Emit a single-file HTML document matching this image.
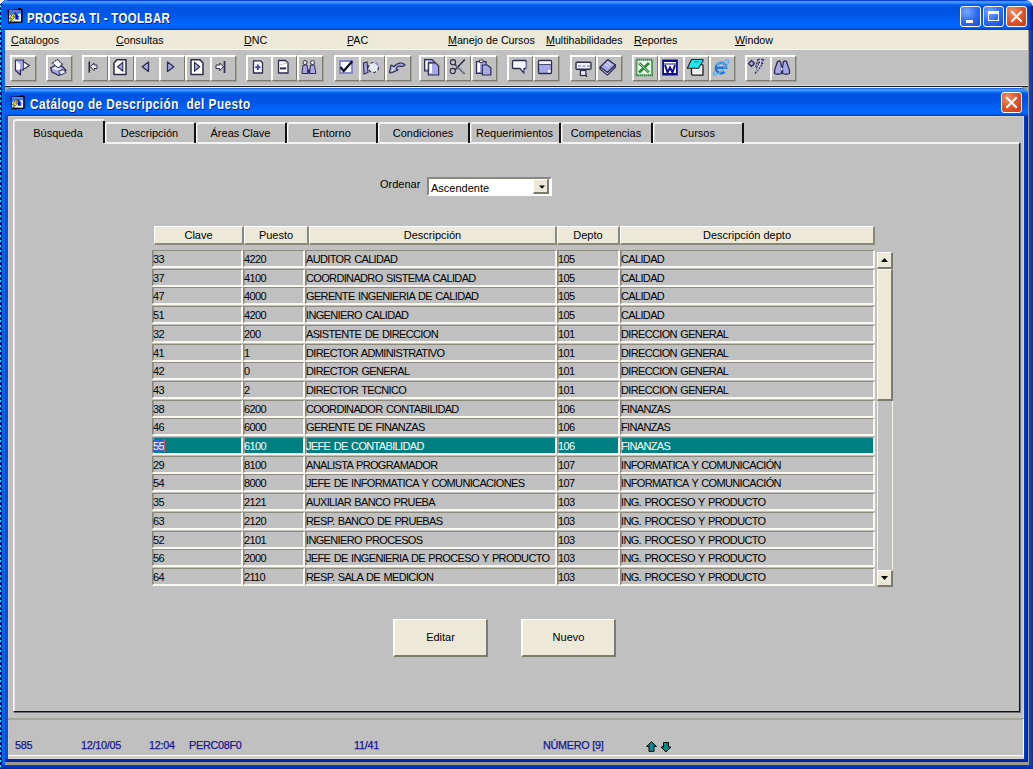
<!DOCTYPE html><html><head><meta charset="utf-8"><style>
*{margin:0;padding:0;box-sizing:border-box}
html,body{width:1033px;height:769px;overflow:hidden;background:#F6F2EA;font-family:"Liberation Sans",sans-serif;}
.ab{position:absolute}
.title{background:linear-gradient(#0842D8 0px,#0842D8 1px,#3D95FF 1px,#3D95FF 3px,#0A6EF8 4px,#0054E3 6px,#0054E3 13px,#005CEE 18px,#0066FF 24px,#0064FA 28px,#0047D0 29px,#0040C8 30px)}
.ctitle{background:linear-gradient(#0842D8 0px,#3D95FF 1px,#3D95FF 3px,#0A6EF8 4px,#0054E3 6px,#0054E3 12px,#005CEE 17px,#0066FF 22px,#0064FA 26px,#0047D0 27px,#0040C8 28px)}
.tt{color:#fff;font-weight:bold;white-space:nowrap;text-shadow:1px 1px 0 #0a1e80}
.menu{font-size:10.7px;color:#000;white-space:nowrap;top:33.5px}
.tb{position:absolute;top:55px;width:26px;height:26px;background:#C0C0C0;border-top:2px solid #FCFCF8;border-left:2px solid #FCFCF8;border-right:1px solid #7C7A6C;border-bottom:1px solid #7C7A6C;box-shadow:1px 1px 0 #A8A698}
.tb svg{position:absolute;left:1px;top:1px}
.tab{position:absolute;top:122px;height:22px;font-size:11px;color:#000;text-align:center;line-height:18px;white-space:nowrap}
.hd{position:absolute;top:226px;height:19px;background:#ECE9D8;border-top:1px solid #FFFFFF;border-left:1px solid #FFFFFF;border-right:2px solid #8A887A;border-bottom:2px solid #8A887A;font-size:11px;text-align:center;line-height:16px;color:#000}
.c{position:absolute;height:18px;background:#C0C0C0;border-top:1px solid #8C8A7C;border-left:1px solid #8C8A7C;box-shadow:inset 1px 0 0 #9C9A8C;border-right:2px solid #FAF8F0;border-bottom:2px solid #FAF8F0;font-size:11px;line-height:16px;letter-spacing:-0.65px;word-spacing:1px;text-indent:0px;color:#000;white-space:nowrap;overflow:hidden}
.c.sel{background:#008080;color:#fff}
.st{position:absolute;top:739px;font-size:10.8px;letter-spacing:-0.25px;color:#161690;-webkit-text-stroke:0.25px #161690;white-space:nowrap}
</style></head><body><div class="ab" style="left:0;top:0;width:1px;height:769px;background:repeating-linear-gradient(#00F0F0 0px,#00F0F0 2px,#000880 2px,#000880 5px)"></div><div class="ab" style="left:1px;top:0;width:1px;height:769px;background:#0010C8"></div><div class="ab" style="left:2px;top:0;width:3px;height:769px;background:#1060E8"></div><div class="ab title" style="left:1px;top:0;width:1032px;height:30px;border-radius:7px 8px 0 0"></div><div class="ab" style="left:1026px;top:6px;width:7px;height:24px;background:linear-gradient(90deg,rgba(0,40,180,0),#0018A0)"></div><div class="ab" style="left:0;top:0;width:5px;height:5px;background:linear-gradient(135deg,#F8F0D8 50%,transparent 50%)"></div><div class="ab" style="left:1028px;top:30px;width:1px;height:735px;background:#9C9A8C"></div><div class="ab" style="left:1029px;top:30px;width:4px;height:739px;background:linear-gradient(90deg,#0050E8,#0030B0)"></div><div class="ab" style="left:1px;top:765px;width:1032px;height:4px;background:linear-gradient(#0040D8,#0028A0)"></div><div class="ab" style="left:5px;top:762px;width:1023px;height:3px;background:#9C9A8C"></div><svg class="ab" style="left:7px;top:7px" width="17" height="17" viewBox="0 0 17 17"><path d="M0.5 3 L11 2.2 L11 1 L14.2 1 L14.2 2 L15.6 2 L15.6 15.6 L1.5 16.5 Z" fill="#00001A"/>
<rect x="2" y="3.5" width="12" height="11" fill="#D8F4F0"/>
<path d="M2 3.5 H14 V6.5 Q8 7.5 2 8.5 Z" fill="#4878F0"/>
<rect x="4.5" y="7.5" width="2.5" height="2.5" fill="#F08888"/>
<path d="M8 5 L12.5 10 L10.8 10 L12.5 13 L8.5 13 Z" fill="#0010F0"/>
<path d="M8.5 12.5 H13.5 V14 H8.5Z" fill="#fff"/>
<path d="M5.8 6.5 L2.5 11.5 L4.8 11.5 L1.2 17 L8.2 9.8 L5.9 9.8 L8 6.5 Z" fill="#F8F000" stroke="#202000" stroke-width="0.6"/></svg><div class="ab tt" style="left:27px;top:10px;font-size:14.5px;line-height:16px;letter-spacing:0.5px;transform:scaleX(0.785);transform-origin:0 0">PROCESA TI - TOOLBAR</div><div class="ab" style="left:960px;top:6px;width:21px;height:21px;border:1px solid #fff;border-radius:3px;background:radial-gradient(circle at 30% 25%,#7AA8FF 0%,#2F6EF0 50%,#1648D8 100%)"><div class="ab" style="left:5px;top:13px;width:7px;height:3px;background:#fff"></div></div><div class="ab" style="left:983px;top:6px;width:21px;height:21px;border:1px solid #fff;border-radius:3px;background:radial-gradient(circle at 30% 25%,#7AA8FF 0%,#2F6EF0 50%,#1648D8 100%)"><div class="ab" style="left:4px;top:4px;width:11px;height:10px;border:1px solid #fff;border-top:3px solid #fff"></div></div><div class="ab" style="left:1006px;top:6px;width:21px;height:21px;border:1px solid #fff;border-radius:3px;background:radial-gradient(circle at 30% 25%,#F09070 0%,#E05A30 45%,#C83810 100%)"><svg class="ab" style="left:0;top:0" width="19" height="19" viewBox="0 0 19 19"><path d="M5 5 L14 14 M14 5 L5 14" stroke="#fff" stroke-width="2" stroke-linecap="square"/></svg></div><div class="ab" style="left:5px;top:30px;width:1023px;height:20px;background:#ECE9D8;border-bottom:1px solid #F8F6EC"></div><div class="ab menu" style="left:11px"><u>C</u>atalogos</div><div class="ab menu" style="left:116px"><u>C</u>onsultas</div><div class="ab menu" style="left:244px"><u>D</u>NC</div><div class="ab menu" style="left:347px"><u>P</u>AC</div><div class="ab menu" style="left:448px"><u>M</u>anejo de Cursos</div><div class="ab menu" style="left:546px"><u>M</u>ultihabilidades</div><div class="ab menu" style="left:634px"><u>R</u>eportes</div><div class="ab menu" style="left:735px"><u>W</u>indow</div><div class="ab" style="left:5px;top:50px;width:1023px;height:36px;background:#C0C0C0;border-bottom:1px solid #E0DED8"></div><div class="ab" style="left:5px;top:86px;width:1023px;height:1px;background:#1c1c1c"></div><div class="tb" style="left:10px"><svg width="19" height="19" viewBox="0 0 19 19"><path d="M2.5 2 L10.5 2 L10.5 12 L7.5 12 L7.5 17 L2.5 12.5 Z" fill="#A8A8E8" stroke="#2C2C4C" stroke-width="1.2" stroke-linejoin="round"/><path d="M3.2 3 L7 6.5 L7 11.5 L3.2 11.5 Z" fill="#fff"/><path d="M10.8 4.5 L12 4.5 L16.2 7.5 L12 10.5 L10.8 10.5" fill="#F0F0F4" stroke="#303040" stroke-width="1.2"/></svg></div><div class="tb" style="left:46px"><svg width="19" height="19" viewBox="0 0 19 19"><path d="M1.5 10 L6 7.5 L13.5 8.5 L17 12.5 L10 17.5 L3 14 Z" fill="#A8A8E8" stroke="#2C2C4C" stroke-width="1.2"/><path d="M3.5 5 L8.5 1.5 L13.5 6.5 L9 10 Z" fill="#fff" stroke="#2C2C4C" stroke-width="1.1" stroke-dasharray="2 0.8"/><path d="M3 10.5 L6.5 8.8 L9 10.5 L12.5 9.5 L9.5 12.8 Z" fill="#F0F0F8"/><path d="M9.5 13.5 L14 11.5 L17 14.5 L12 17 Z" fill="#E8E8F0" stroke="#2C2C4C" stroke-width="1"/></svg></div><div class="tb" style="left:82px"><svg width="19" height="19" viewBox="0 0 19 19"><path d="M4.3 3.5 V14.6" stroke="#2C2C4C" stroke-width="1.7"/><path d="M5.5 8.8 L9 5 V7 H12 V10.6 H9 V12.6 Z" fill="#F4F4FF" stroke="#2C2C4C" stroke-width="1"/></svg></div><div class="tb" style="left:108px"><svg width="19" height="19" viewBox="0 0 19 19"><path d="M3 5 L6 1.8 H15 V16.5 H3 Z" fill="#fff" stroke="#2C2C4C" stroke-width="1.5" stroke-linejoin="round"/><path d="M11.8 4.5 V13 L6.5 8.8 Z" fill="#A8A8E8" stroke="#2C2C4C" stroke-width="1.1"/></svg></div><div class="tb" style="left:134px"><svg width="19" height="19" viewBox="0 0 19 19"><path d="M11.5 4 V13.6 L5.2 8.8 Z" fill="#A8A8E8" stroke="#2C2C4C" stroke-width="1.3" stroke-linejoin="round"/></svg></div><div class="tb" style="left:159px"><svg width="19" height="19" viewBox="0 0 19 19"><path d="M5.5 4 V13.6 L11.8 8.8 Z" fill="#A8A8E8" stroke="#2C2C4C" stroke-width="1.3" stroke-linejoin="round"/></svg></div><div class="tb" style="left:185px"><svg width="19" height="19" viewBox="0 0 19 19"><path d="M3 1.8 H12 L15 5 V16.5 H3 Z" fill="#fff" stroke="#2C2C4C" stroke-width="1.5" stroke-linejoin="round"/><path d="M6.5 4.5 V13 L11.8 8.8 Z" fill="#A8A8E8" stroke="#2C2C4C" stroke-width="1.1"/></svg></div><div class="tb" style="left:210px"><svg width="19" height="19" viewBox="0 0 19 19"><path d="M11.5 3 V15" stroke="#2C2C4C" stroke-width="1.7"/><path d="M10.3 8.8 L6.8 5 V7 H3 V10.6 H6.8 V12.6 Z" fill="#F4F4FF" stroke="#2C2C4C" stroke-width="1"/></svg></div><div class="tb" style="left:246px"><svg width="19" height="19" viewBox="0 0 19 19"><path d="M4.5 2.8 H11.5 L13.5 4.8 V15 H4.5 Z" fill="#fff" stroke="#2C2C4C" stroke-width="1.3" stroke-linejoin="round"/><path d="M6.2 9.3 H11.6 M8.9 6.6 V12" stroke="#4848A8" stroke-width="2"/></svg></div><div class="tb" style="left:271px"><svg width="19" height="19" viewBox="0 0 19 19"><path d="M4.5 2.5 H11.5 L14 5 V15 H4.5 Z" fill="#fff" stroke="#2C2C4C" stroke-width="1.3" stroke-linejoin="round"/><path d="M5.9 10.4 H12.2" stroke="#2C2C4C" stroke-width="2"/><path d="M5.5 7 L13.5 5" stroke="#C8C8E0" stroke-width="1"/></svg></div><div class="tb" style="left:297px"><svg width="19" height="19" viewBox="0 0 19 19"><circle cx="5" cy="4.5" r="2" fill="#fff" stroke="#2C2C4C" stroke-width="1"/><circle cx="12.5" cy="4.5" r="2" fill="#fff" stroke="#2C2C4C" stroke-width="1"/><path d="M2 15.5 L3 7 H7 L8 15.5 Z M9.5 15.5 L10.5 7 H14.5 L15.8 15.5 Z" fill="#A8A8E8" stroke="#2C2C4C" stroke-width="1"/><path d="M7.5 15.5 V11.5 H10 V15.5 Z" fill="#2C2C4C"/></svg></div><div class="tb" style="left:334px"><svg width="19" height="19" viewBox="0 0 19 19"><rect x="3" y="3" width="12" height="12" fill="#F8F8FF" stroke="#8080D0" stroke-width="1.8"/><path d="M3.5 9 L6.7 13 L15.3 3.3" fill="none" stroke="#101020" stroke-width="2.2"/></svg></div><div class="tb" style="left:359px"><svg width="19" height="19" viewBox="0 0 19 19"><path d="M1.5 5 L5 4 L6 14.5 L2 16 Z" fill="#A8A8E8" stroke="#2C2C4C" stroke-width="1.1"/><circle cx="11.5" cy="9.5" r="5" fill="#E8E8F0" stroke="#2C2C4C" stroke-width="1.1" stroke-dasharray="3 2"/><path d="M14 4 A5 5 0 0 1 16.5 9" stroke="#A8A8E8" stroke-width="1.5" fill="none"/></svg></div><div class="tb" style="left:385px"><svg width="19" height="19" viewBox="0 0 19 19"><path d="M1.5 14.5 L3 7 L6 8.5 C9 5 14 3.5 17 7 C15.5 9 14 8.5 12 8 C10 8 8 10 8.5 11 L10 12 L3 15 Z" fill="#A8A8E8" stroke="#2C2C4C" stroke-width="1.2" stroke-linejoin="round"/><path d="M4 13 L6 10" stroke="#fff" stroke-width="1"/></svg></div><div class="tb" style="left:419px"><svg width="19" height="19" viewBox="0 0 19 19"><path d="M2.6 1.5 H10 L12.5 4 V13 H2.6 Z" fill="#A8A8E8" stroke="#2C2C4C" stroke-width="1.2"/><path d="M3.6 3 H6 V11 H3.6Z" fill="#fff"/><path d="M6.3 4.8 H13.5 L16.7 8 V17 H6.3 Z" fill="#A8A8E8" stroke="#2C2C4C" stroke-width="1.2"/><path d="M7.5 6 H10 V15 H7.5Z" fill="#fff"/></svg></div><div class="tb" style="left:445px"><svg width="19" height="19" viewBox="0 0 19 19"><path d="M6.5 6 L16.5 15.8 M16.8 1.5 L7 12" stroke="#2C2C4C" stroke-width="1.5"/><path d="M8 7.5 L16 15" stroke="#A8A8E8" stroke-width="0.8"/><circle cx="5" cy="4.2" r="2.6" fill="none" stroke="#2C2C4C" stroke-width="1.1"/><circle cx="4.8" cy="13" r="2.6" fill="none" stroke="#2C2C4C" stroke-width="1.1"/></svg></div><div class="tb" style="left:471px"><svg width="19" height="19" viewBox="0 0 19 19"><path d="M2.4 3.5 H12 V15.3 H2.4 Z" fill="#A8A8E8" stroke="#2C2C4C" stroke-width="1.2"/><path d="M3.5 4.5 H6 V14 H3.5Z" fill="#fff"/><path d="M5.5 2 H9 V4.5 H5.5Z" fill="#fff" stroke="#2C2C4C" stroke-width="0.9"/><path d="M8.3 7 H13.5 L16.9 10 V17 H8.3 Z" fill="#A8A8E8" stroke="#2C2C4C" stroke-width="1.2"/></svg></div><div class="tb" style="left:507px"><svg width="19" height="19" viewBox="0 0 19 19"><path d="M2.5 3.5 Q2.5 2.5 4 2.5 H15 Q16.3 2.5 16.3 4 V10 Q16.3 10.5 15 10.5 H14 L14 15.2 L10 10.5 H3.5 Q2.5 10.5 2.5 9.5 Z" fill="#F8F8FF" stroke="#2C2C4C" stroke-width="1.3" stroke-linejoin="round"/><path d="M17 4 V11 M15 12 V15" stroke="#A8A8E8" stroke-width="1.2"/></svg></div><div class="tb" style="left:533px"><svg width="19" height="19" viewBox="0 0 19 19"><rect x="2.5" y="2.5" width="13" height="13" fill="#A8A8E8" stroke="#2C2C4C" stroke-width="1.3" rx="1"/><rect x="3.3" y="3.3" width="11.5" height="3" fill="#F0F0FF"/><path d="M3.3 6.5 H14.8" stroke="#2C2C4C" stroke-width="0.8"/><rect x="12" y="12" width="2.5" height="2.5" fill="#fff"/></svg></div><div class="tb" style="left:570px"><svg width="19" height="19" viewBox="0 0 19 19"><rect x="3" y="4.2" width="15" height="7" fill="#F4F4FF" stroke="#2C2C4C" stroke-width="1.4" rx="1"/><path d="M5 8 H8 M9.5 8 H12.5 M14 8 H17" stroke="#A8A8E8" stroke-width="2"/><rect x="7.4" y="12.5" width="5.5" height="5" fill="#E8E8F0" stroke="#2C2C4C" stroke-width="1.2"/><path d="M12.5 17 L14 18.8" stroke="#2C2C4C" stroke-width="1.3"/></svg></div><div class="tb" style="left:596px"><svg width="19" height="19" viewBox="0 0 19 19"><path d="M1 9 L9 1.5 L16.5 7 L8.5 14.5 Z" fill="#A8A8E8" stroke="#2C2C4C" stroke-width="1.2" stroke-linejoin="round"/><path d="M1 9 L1 11 L8.5 17 L16.5 9 L16.5 7 L8.5 14.5 Z" fill="#F4F4FF" stroke="#2C2C4C" stroke-width="1.1" stroke-linejoin="round"/><path d="M6 6 L10 9 M8 4 L12 7" stroke="#F0F0FF" stroke-width="1"/></svg></div><div class="tb" style="left:632px"><svg width="19" height="19" viewBox="0 0 19 19"><rect x="1.5" y="1.8" width="15.5" height="15.5" fill="#ECF4EC" stroke="#2E8A3A" stroke-width="2" stroke-dasharray="1.5 0.5"/><path d="M4 5 L14 14.5 M14 5 L4 14.5" stroke="#2E8A3A" stroke-width="2.8"/><path d="M4 5 L14 14.5" stroke="#ECF4EC" stroke-width="0.7"/></svg></div><div class="tb" style="left:658px"><svg width="19" height="19" viewBox="0 0 19 19"><rect x="1.2" y="1.5" width="15.6" height="16" fill="#10108A"/><rect x="3" y="4" width="12" height="1.5" fill="#fff"/><rect x="3" y="6.5" width="12" height="8.5" fill="#fff"/><path d="M4 7 L6.5 14.5 L9 9.5 L11.5 14.5 L14 7" fill="none" stroke="#10108A" stroke-width="2"/></svg></div><div class="tb" style="left:683px"><svg width="19" height="19" viewBox="0 0 19 19"><path d="M5.5 6.4 H15.5 Q17 6.4 17 8 V17.2 H7 Q5.5 17.2 5.5 15.5 Z" fill="#F0F0F0" stroke="#202020" stroke-width="1.3"/><path d="M1.3 10.3 L5.5 1.5 H17 V3 L12.5 10.3 Z" fill="#20E8F0" stroke="#202020" stroke-width="1.1" stroke-linejoin="round"/><path d="M8 3.8 H13" stroke="#108890" stroke-width="1"/></svg></div><div class="tb" style="left:709px"><svg width="19" height="19" viewBox="0 0 19 19"><path d="M4 9.8 H14.2 A5.2 5.2 0 1 0 12.6 13.8" fill="none" stroke="#1E74DC" stroke-width="2.4"/><path d="M5 8.6 A4 4 0 0 1 13 8.6" fill="none" stroke="#6CC0F8" stroke-width="1"/><path d="M3.2 13 Q-0.5 17.5 3 16.8 Q8 15.5 13.5 9.5 Q18 4 16 2.3 Q14.8 1.5 12.5 3" fill="none" stroke="#58B0F0" stroke-width="1.3"/></svg></div><div class="tb" style="left:745px"><svg width="19" height="19" viewBox="0 0 19 19"><path d="M3.5 2.5 L6.5 5.5 L3.5 8.5 L0.5 5.5 Z" fill="#A8A8E8" stroke="#2C2C4C" stroke-width="1.3" stroke-linejoin="round"/><path d="M10 1.2 L16 1.2 L13 5.5 L15 5.5 L7 16 L9.5 9.5 L7.5 9.5 Z" fill="#A8A8E8" stroke="#2C2C4C" stroke-width="1.1" stroke-linejoin="round" stroke-dasharray="2 1"/><path d="M11 3 L13 3 L8.5 13" stroke="#F4F4FF" stroke-width="1"/></svg></div><div class="tb" style="left:770px"><svg width="19" height="19" viewBox="0 0 19 19"><path d="M1.5 15.5 Q1 12 3 8 L4.5 3.5 Q6 2.5 7.5 3.5 L8.5 9 L8.5 15.5 Q5 17 1.5 15.5 Z M9.5 15.5 L9.5 9 L10.5 3.5 Q12 2.5 13.5 3.5 L15 8 Q17 12 16.5 15.5 Q13 17 9.5 15.5 Z" fill="#A8A8E8" stroke="#2C2C4C" stroke-width="1.3" stroke-linejoin="round"/><path d="M8 9 L10 11 L8 13" fill="#E8E8FF"/></svg></div><div class="ab" style="left:5px;top:87px;width:3px;height:675px;background:#0050E0"></div><div class="ab" style="left:1024px;top:116px;width:4px;height:646px;background:linear-gradient(90deg,#0040D0,#0020A0)"></div><div class="ab" style="left:5px;top:759px;width:1023px;height:3px;background:linear-gradient(#0030C0,#0020A0)"></div><div class="ab" style="left:1022px;top:87px;width:6px;height:8px;background:#A8A698"></div><div class="ab" style="left:5px;top:87px;width:6px;height:6px;background:#A8A698"></div><div class="ab ctitle" style="left:5px;top:88px;width:1023px;height:28px;border-radius:6px 6px 0 0"></div><svg class="ab" style="left:10px;top:94px" width="16" height="16" viewBox="0 0 17 17"><path d="M0.5 3 L11 2.2 L11 1 L14.2 1 L14.2 2 L15.6 2 L15.6 15.6 L1.5 16.5 Z" fill="#00001A"/>
<rect x="2" y="3.5" width="12" height="11" fill="#D8F4F0"/>
<path d="M2 3.5 H14 V6.5 Q8 7.5 2 8.5 Z" fill="#4878F0"/>
<rect x="4.5" y="7.5" width="2.5" height="2.5" fill="#F08888"/>
<path d="M8 5 L12.5 10 L10.8 10 L12.5 13 L8.5 13 Z" fill="#0010F0"/>
<path d="M8.5 12.5 H13.5 V14 H8.5Z" fill="#fff"/>
<path d="M5.8 6.5 L2.5 11.5 L4.8 11.5 L1.2 17 L8.2 9.8 L5.9 9.8 L8 6.5 Z" fill="#F8F000" stroke="#202000" stroke-width="0.6"/></svg><div class="ab tt" style="left:30px;top:96px;font-size:14.5px;line-height:16px;letter-spacing:0.6px;white-space:pre;transform:scaleX(0.81);transform-origin:0 0">Catálogo de Descripción  del Puesto</div><div class="ab" style="left:1001px;top:92px;width:21px;height:21px;border:1px solid #fff;border-radius:3px;background:radial-gradient(circle at 30% 25%,#F09070 0%,#E05A30 45%,#C83810 100%)"><svg class="ab" style="left:0;top:0" width="19" height="19" viewBox="0 0 19 19"><path d="M5 5 L14 14 M14 5 L5 14" stroke="#fff" stroke-width="2" stroke-linecap="square"/></svg></div><div class="ab" style="left:8px;top:116px;width:1016px;height:643px;background:#C0C0C0;border-top:1px solid #D8D2C0;border-left:1px solid #CCC8BC;border-right:1px solid #D8D2C0"></div><div class="ab" style="left:13px;top:142px;width:1007px;height:570px;border-top:2px solid #F4F4F4;border-left:1px solid #FFFFFF;border-right:1px solid #101010;border-bottom:1px solid #101010;box-shadow:1px 1px 0 #707070,inset 1px 0 0 #E4E4E4"></div><div class="ab" style="left:13px;top:119px;width:91px;height:25px;background:#C0C0C0;border-top:2px solid #F4F4F4;border-left:1px solid #FFFFFF;box-shadow:inset 1px 0 0 #D8D8D8;border-radius:3px 0 0 0"></div><div class="ab" style="left:103px;top:121px;width:2px;height:22px;background:#101010"></div><div class="tab" style="left:13px;top:124px;width:90px">Búsqueda</div><div class="ab" style="left:105px;top:122px;width:89px;height:21px;border-top:2px solid #F4F4F4;border-left:1px solid #FFFFFF;box-shadow:inset 1px 0 0 #D8D8D8;border-radius:3px 0 0 0"></div><div class="ab" style="left:194px;top:123px;width:2px;height:20px;background:#101010"></div><div class="tab" style="left:105px;top:124px;width:89px">Descripción</div><div class="ab" style="left:196px;top:122px;width:89px;height:21px;border-top:2px solid #F4F4F4;border-left:1px solid #FFFFFF;box-shadow:inset 1px 0 0 #D8D8D8;border-radius:3px 0 0 0"></div><div class="ab" style="left:285px;top:123px;width:2px;height:20px;background:#101010"></div><div class="tab" style="left:196px;top:124px;width:89px">Áreas Clave</div><div class="ab" style="left:287px;top:122px;width:89px;height:21px;border-top:2px solid #F4F4F4;border-left:1px solid #FFFFFF;box-shadow:inset 1px 0 0 #D8D8D8;border-radius:3px 0 0 0"></div><div class="ab" style="left:376px;top:123px;width:2px;height:20px;background:#101010"></div><div class="tab" style="left:287px;top:124px;width:89px">Entorno</div><div class="ab" style="left:378px;top:122px;width:90px;height:21px;border-top:2px solid #F4F4F4;border-left:1px solid #FFFFFF;box-shadow:inset 1px 0 0 #D8D8D8;border-radius:3px 0 0 0"></div><div class="ab" style="left:468px;top:123px;width:2px;height:20px;background:#101010"></div><div class="tab" style="left:378px;top:124px;width:90px">Condiciones</div><div class="ab" style="left:470px;top:122px;width:89px;height:21px;border-top:2px solid #F4F4F4;border-left:1px solid #FFFFFF;box-shadow:inset 1px 0 0 #D8D8D8;border-radius:3px 0 0 0"></div><div class="ab" style="left:559px;top:123px;width:2px;height:20px;background:#101010"></div><div class="tab" style="left:470px;top:124px;width:89px">Requerimientos</div><div class="ab" style="left:561px;top:122px;width:90px;height:21px;border-top:2px solid #F4F4F4;border-left:1px solid #FFFFFF;box-shadow:inset 1px 0 0 #D8D8D8;border-radius:3px 0 0 0"></div><div class="ab" style="left:651px;top:123px;width:2px;height:20px;background:#101010"></div><div class="tab" style="left:561px;top:124px;width:90px">Competencias</div><div class="ab" style="left:653px;top:122px;width:89px;height:21px;border-top:2px solid #F4F4F4;border-left:1px solid #FFFFFF;box-shadow:inset 1px 0 0 #D8D8D8;border-radius:3px 0 0 0"></div><div class="ab" style="left:742px;top:123px;width:2px;height:20px;background:#101010"></div><div class="tab" style="left:653px;top:124px;width:89px">Cursos</div><div class="ab" style="left:380px;top:178px;font-size:11px;color:#000">Ordenar</div><div class="ab" style="left:427px;top:177px;width:125px;height:19px;background:#fff;border-top:2px solid #8A887A;border-left:2px solid #8A887A;border-right:2px solid #FCFCF8;border-bottom:2px solid #FCFCF8"></div><div class="ab" style="left:431px;top:182px;font-size:11px;color:#000">Ascendente</div><div class="ab" style="left:533px;top:179px;width:16px;height:15px;background:#ECE9D8;border-top:1px solid #FCFCF8;border-left:1px solid #FCFCF8;border-right:2px solid #7C7A6C;border-bottom:2px solid #7C7A6C"></div><svg class="ab" style="left:538.5px;top:185px" width="6" height="4" viewBox="0 0 6 4"><path d="M0 0.5 H6 L3 3.8 Z" fill="#000"/></svg><div class="hd" style="left:154px;width:90px">Clave</div><div class="hd" style="left:244px;width:65px">Puesto</div><div class="hd" style="left:309px;width:248px">Descripción</div><div class="hd" style="left:557px;width:63px">Depto</div><div class="hd" style="left:620px;width:255px">Descripción depto</div><div class="c" style="left:152px;top:250px;width:91px">33</div><div class="c" style="left:243px;top:250px;width:62px">4220</div><div class="c" style="left:305px;top:250px;width:252px">AUDITOR CALIDAD</div><div class="c" style="left:557px;top:250px;width:63px">105</div><div class="c" style="left:620px;top:250px;width:255px">CALIDAD</div><div class="c" style="left:152px;top:269px;width:91px">37</div><div class="c" style="left:243px;top:269px;width:62px">4100</div><div class="c" style="left:305px;top:269px;width:252px">COORDINADRO SISTEMA CALIDAD</div><div class="c" style="left:557px;top:269px;width:63px">105</div><div class="c" style="left:620px;top:269px;width:255px">CALIDAD</div><div class="c" style="left:152px;top:287px;width:91px">47</div><div class="c" style="left:243px;top:287px;width:62px">4000</div><div class="c" style="left:305px;top:287px;width:252px">GERENTE INGENIERIA DE CALIDAD</div><div class="c" style="left:557px;top:287px;width:63px">105</div><div class="c" style="left:620px;top:287px;width:255px">CALIDAD</div><div class="c" style="left:152px;top:306px;width:91px">51</div><div class="c" style="left:243px;top:306px;width:62px">4200</div><div class="c" style="left:305px;top:306px;width:252px">INGENIERO CALIDAD</div><div class="c" style="left:557px;top:306px;width:63px">105</div><div class="c" style="left:620px;top:306px;width:255px">CALIDAD</div><div class="c" style="left:152px;top:325px;width:91px">32</div><div class="c" style="left:243px;top:325px;width:62px">200</div><div class="c" style="left:305px;top:325px;width:252px">ASISTENTE DE DIRECCION</div><div class="c" style="left:557px;top:325px;width:63px">101</div><div class="c" style="left:620px;top:325px;width:255px">DIRECCION GENERAL</div><div class="c" style="left:152px;top:344px;width:91px">41</div><div class="c" style="left:243px;top:344px;width:62px">1</div><div class="c" style="left:305px;top:344px;width:252px">DIRECTOR ADMINISTRATIVO</div><div class="c" style="left:557px;top:344px;width:63px">101</div><div class="c" style="left:620px;top:344px;width:255px">DIRECCION GENERAL</div><div class="c" style="left:152px;top:362px;width:91px">42</div><div class="c" style="left:243px;top:362px;width:62px">0</div><div class="c" style="left:305px;top:362px;width:252px">DIRECTOR GENERAL</div><div class="c" style="left:557px;top:362px;width:63px">101</div><div class="c" style="left:620px;top:362px;width:255px">DIRECCION GENERAL</div><div class="c" style="left:152px;top:381px;width:91px">43</div><div class="c" style="left:243px;top:381px;width:62px">2</div><div class="c" style="left:305px;top:381px;width:252px">DIRECTOR TECNICO</div><div class="c" style="left:557px;top:381px;width:63px">101</div><div class="c" style="left:620px;top:381px;width:255px">DIRECCION GENERAL</div><div class="c" style="left:152px;top:400px;width:91px">38</div><div class="c" style="left:243px;top:400px;width:62px">6200</div><div class="c" style="left:305px;top:400px;width:252px">COORDINADOR CONTABILIDAD</div><div class="c" style="left:557px;top:400px;width:63px">106</div><div class="c" style="left:620px;top:400px;width:255px">FINANZAS</div><div class="c" style="left:152px;top:418px;width:91px">46</div><div class="c" style="left:243px;top:418px;width:62px">6000</div><div class="c" style="left:305px;top:418px;width:252px">GERENTE DE FINANZAS</div><div class="c" style="left:557px;top:418px;width:63px">106</div><div class="c" style="left:620px;top:418px;width:255px">FINANZAS</div><div class="c sel" style="left:152px;top:437px;width:91px"><span style="background:#3060D8;color:#fff">55</span><span style="display:inline-block;width:1px;height:13px;background:#D06060;vertical-align:top;margin-top:1px"></span></div><div class="c sel" style="left:243px;top:437px;width:62px">6100</div><div class="c sel" style="left:305px;top:437px;width:252px">JEFE DE CONTABILIDAD</div><div class="c sel" style="left:557px;top:437px;width:63px">106</div><div class="c sel" style="left:620px;top:437px;width:255px">FINANZAS</div><div class="c" style="left:152px;top:456px;width:91px">29</div><div class="c" style="left:243px;top:456px;width:62px">8100</div><div class="c" style="left:305px;top:456px;width:252px">ANALISTA PROGRAMADOR</div><div class="c" style="left:557px;top:456px;width:63px">107</div><div class="c" style="left:620px;top:456px;width:255px">INFORMATICA Y COMUNICACIÓN</div><div class="c" style="left:152px;top:474px;width:91px">54</div><div class="c" style="left:243px;top:474px;width:62px">8000</div><div class="c" style="left:305px;top:474px;width:252px">JEFE DE INFORMATICA Y COMUNICACIONES</div><div class="c" style="left:557px;top:474px;width:63px">107</div><div class="c" style="left:620px;top:474px;width:255px">INFORMATICA Y COMUNICACIÓN</div><div class="c" style="left:152px;top:493px;width:91px">35</div><div class="c" style="left:243px;top:493px;width:62px">2121</div><div class="c" style="left:305px;top:493px;width:252px">AUXILIAR BANCO PRUEBA</div><div class="c" style="left:557px;top:493px;width:63px">103</div><div class="c" style="left:620px;top:493px;width:255px">ING. PROCESO Y PRODUCTO</div><div class="c" style="left:152px;top:512px;width:91px">63</div><div class="c" style="left:243px;top:512px;width:62px">2120</div><div class="c" style="left:305px;top:512px;width:252px">RESP. BANCO DE PRUEBAS</div><div class="c" style="left:557px;top:512px;width:63px">103</div><div class="c" style="left:620px;top:512px;width:255px">ING. PROCESO Y PRODUCTO</div><div class="c" style="left:152px;top:531px;width:91px">52</div><div class="c" style="left:243px;top:531px;width:62px">2101</div><div class="c" style="left:305px;top:531px;width:252px">INGENIERO PROCESOS</div><div class="c" style="left:557px;top:531px;width:63px">103</div><div class="c" style="left:620px;top:531px;width:255px">ING. PROCESO Y PRODUCTO</div><div class="c" style="left:152px;top:549px;width:91px">56</div><div class="c" style="left:243px;top:549px;width:62px">2000</div><div class="c" style="left:305px;top:549px;width:252px">JEFE DE INGENIERIA DE PROCESO Y PRODUCTO</div><div class="c" style="left:557px;top:549px;width:63px">103</div><div class="c" style="left:620px;top:549px;width:255px">ING. PROCESO Y PRODUCTO</div><div class="c" style="left:152px;top:568px;width:91px">64</div><div class="c" style="left:243px;top:568px;width:62px">2110</div><div class="c" style="left:305px;top:568px;width:252px">RESP. SALA DE MEDICION</div><div class="c" style="left:557px;top:568px;width:63px">103</div><div class="c" style="left:620px;top:568px;width:255px">ING. PROCESO Y PRODUCTO</div><div class="ab" style="left:877px;top:252px;width:16px;height:334px;background:#C0C0C0;border-left:1px solid #F4F2E8;border-right:1px solid #F4F2E8"></div><div class="ab" style="left:877px;top:252px;width:16px;height:17px;background:#ECE9D8;border-top:1px solid #FCFCF8;border-left:1px solid #FCFCF8;border-right:2px solid #7C7A6C;border-bottom:2px solid #7C7A6C"></div><div class="ab" style="left:877px;top:269px;width:16px;height:132px;background:#ECE9D8;border-top:1px solid #FCFCF8;border-left:1px solid #FCFCF8;border-right:2px solid #7C7A6C;border-bottom:2px solid #7C7A6C"></div><div class="ab" style="left:877px;top:570px;width:16px;height:17px;background:#ECE9D8;border-top:1px solid #FCFCF8;border-left:1px solid #FCFCF8;border-right:2px solid #7C7A6C;border-bottom:2px solid #7C7A6C"></div><svg class="ab" style="left:881px;top:258px" width="7" height="4" viewBox="0 0 7 4"><path d="M0 4 H7 L3.5 0 Z" fill="#000"/></svg><svg class="ab" style="left:881px;top:576px" width="7" height="4" viewBox="0 0 7 4"><path d="M0 0 H7 L3.5 4 Z" fill="#000"/></svg><div class="ab" style="left:393px;top:619px;width:95px;height:38px;background:#ECE9D8;border-top:1px solid #FCFCF8;border-left:2px solid #FCFCF8;border-right:2px solid #7C7A6C;border-bottom:2px solid #7C7A6C;font-size:11px;text-align:center;line-height:34px;color:#000">Editar</div><div class="ab" style="left:521px;top:619px;width:95px;height:38px;background:#ECE9D8;border-top:1px solid #FCFCF8;border-left:2px solid #FCFCF8;border-right:2px solid #7C7A6C;border-bottom:2px solid #7C7A6C;font-size:11px;text-align:center;line-height:34px;color:#000">Nuevo</div><div class="ab" style="left:8px;top:718px;width:1016px;height:2px;background:#A8A698"></div><div class="ab" style="left:8px;top:755px;width:1016px;height:1px;background:#FCFCFC"></div><div class="ab" style="left:8px;top:756px;width:1016px;height:3px;background:#D4D0C8"></div><div class="ab" style="left:1023px;top:719px;width:1px;height:38px;background:#FCFCFC"></div><div class="st" style="left:15px">585</div><div class="st" style="left:81px">12/10/05</div><div class="st" style="left:149px">12:04</div><div class="st" style="left:189px">PERC08F0</div><div class="st" style="left:354px">11/41</div><div class="st" style="left:543px">NÚMERO [9]</div><svg class="ab" style="left:645px;top:741px" width="28" height="12" viewBox="0 0 28 12"><path d="M6.5 0.8 L11.5 5.5 H9 V10.5 H4 V5.5 H1.5 Z" fill="#008C8C" stroke="#000" stroke-width="1" stroke-linejoin="miter"/><path d="M21 11 L26 6 H23.5 V1.5 H18.5 V6 H16 Z" fill="#008C8C" stroke="#000" stroke-width="1"/></svg></body></html>
